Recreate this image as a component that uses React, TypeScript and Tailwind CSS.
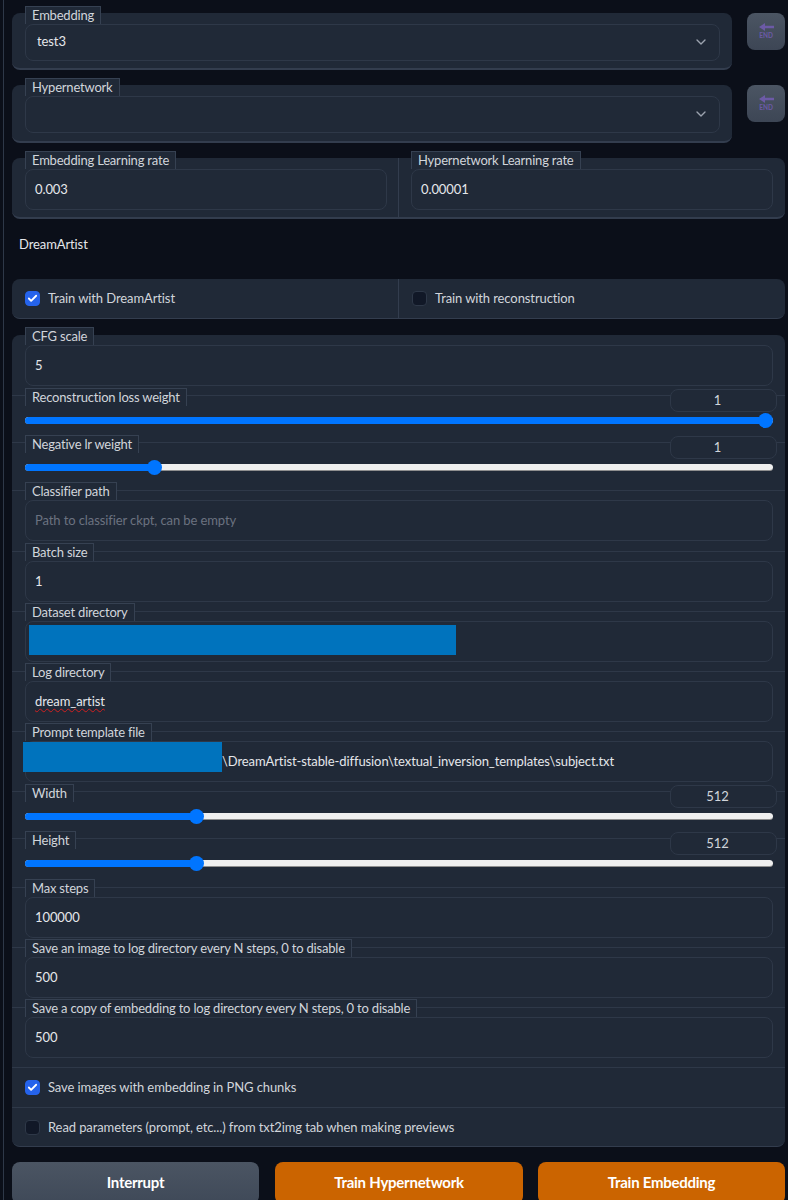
import type { ReactNode } from 'react'
import { ChevronDown, Check } from 'lucide-react'

const font = "font-['Lato',sans-serif]"

function Label({ text, className = '' }: { text: string; className?: string }) {
  return (
    <div className={`relative z-10 w-fit h-[18px] px-[6px] border border-b-0 border-[#364152] bg-[#202937] text-[13px] leading-[17px] tracking-[-0.2px] text-[#d1d5db] ${className}`}>
      {text}
    </div>
  )
}

function Box({ value, placeholder, className = '', children }: { value?: string; placeholder?: string; className?: string; children?: ReactNode }) {
  return (
    <div className={`relative flex items-center h-[41px] px-[9px] rounded-[8px] border border-[#2e3848] bg-[#202937] text-[13px] tracking-[-0.1px] text-[#e5e7eb] ${className}`}>
      {placeholder ? <span className="text-[#6b7280]">{placeholder}</span> : value}
      {children}
    </div>
  )
}

function TextField({ label, value, placeholder, height = 60, children }: { label: string; value?: string; placeholder?: string; height?: number; children?: ReactNode }) {
  return (
    <div className="pl-[13px] pr-[12px] border-t border-[#2e3848]" style={{ height }}>
      <Label text={label} className="-mt-[9px]" />
      <Box value={value} placeholder={placeholder}>{children}</Box>
    </div>
  )
}

function SliderField({ label, value, pct, height = 47 }: { label: string; value: string; pct: number; height?: number }) {
  const pos = `calc(${pct / 100} * (100% - 15px) + 7.5px)`
  return (
    <div className="pl-[13px] pr-[12px] border-t border-[#2e3848]" style={{ height }}>
      <div className="flex justify-between items-start -mt-[8px] -mr-[4px]">
        <Label text={label} />
        <div className="relative z-10 flex items-center justify-center w-[107px] h-[23px] mt-[1px] pr-[12px] rounded-[8px] border border-[#2e3848] bg-[#202937] text-[13px] text-[#d1d5db]">
          {value}
        </div>
      </div>
      <div className="relative h-[7px] mt-[5px] rounded-full bg-[#efefef] border-b border-[#8f8f8f]">
        <div className="h-[7px] rounded-full bg-[#0075ff]" style={{ width: pos }} />
        <div className="absolute top-[-4px] w-[15px] h-[15px] -ml-[7.5px] rounded-full bg-[#0075ff]" style={{ left: pos }} />
      </div>
    </div>
  )
}

function CheckBox({ checked, label }: { checked?: boolean; label: string }) {
  return (
    <div className="flex items-center gap-[8px] text-[13px] tracking-[-0.1px] text-[#d1d5db]">
      <span className={`flex items-center justify-center w-[15px] h-[15px] rounded-[4px] border ${checked ? 'bg-[#2563eb] border-[#2563eb]' : 'bg-[#111827] border-[#2e3848]'}`}>
        {checked && <Check size={11} strokeWidth={4} className="text-white" />}
      </span>
      {label}
    </div>
  )
}

function EndButton() {
  return (
    <div className="flex flex-col items-center justify-center w-[38px] h-[37px] rounded-[8px] bg-gradient-to-b from-[#4b5563] to-[#3d4655] text-[#6c5aa6]">
      <svg width="15" height="8" viewBox="0 0 15 8" fill="currentColor">
        <path d="M0 4 L6 0 V2.8 H15 V5.2 H6 V8 Z" />
      </svg>
      <span className="mt-[1px] text-[6.5px] leading-[8px] font-bold">END</span>
    </div>
  )
}

function SelectRow({ label, value, height }: { label: string; value?: string; height: number }) {
  return (
    <div className="flex items-start">
      <div className="w-[720px] pl-[13px] pr-[12px] rounded-[8px] border-b-2 border-[#333d4e] bg-[#202937]" style={{ height }}>
        <Label text={label} className="-mt-[7px]" />
        <Box value={value} className="!h-[37px] pl-[11px] pr-[10px] pb-[1px] justify-between">
          <span />
          <ChevronDown size={16} className="text-[#9ca3af]" />
        </Box>
      </div>
      <div className="ml-[15px]"><EndButton /></div>
    </div>
  )
}

export default function App() {
  return (
    <div className={`flex w-[788px] h-[1200px] overflow-hidden bg-[#0b0f19] ${font}`}>
      <div className="w-[4px] h-full border-r border-[#2e3848]" />
      <div className="flex-1 pl-[8px] pr-[3px] pt-[13px]">
        <SelectRow label="Embedding" value="test3" height={57} />
        <div className="mt-[15px]">
          <SelectRow label="Hypernetwork" height={58} />
        </div>

        <div className="mt-[15px] flex h-[61px] rounded-[8px] border-b-2 border-[#333d4e] bg-[#202937]">
          <div className="w-[387px] pl-[13px] pr-[11px] border-r border-[#333d4e]">
            <Label text="Embedding Learning rate" className="-mt-[7px]" />
            <Box value="0.003" />
          </div>
          <div className="flex-1 pl-[12px] pr-[12px]">
            <Label text="Hypernetwork Learning rate" className="-mt-[7px]" />
            <Box value="0.00001" />
          </div>
        </div>

        <div className="h-[60px] flex items-center pl-[7px] pb-[8px] text-[13px] tracking-[-0.1px] text-[#e5e7eb]">DreamArtist</div>

        <div className="flex h-[40px] rounded-[8px] border-b border-[#333d4e] bg-[#202937]">
          <div className="flex items-center w-[387px] pl-[13px] border-r border-[#333d4e]">
            <CheckBox checked label="Train with DreamArtist" />
          </div>
          <div className="flex items-center pl-[13px]">
            <CheckBox label="Train with reconstruction" />
          </div>
        </div>

        <div className="flow-root mt-[16px] h-[812px] rounded-[8px] border-b border-[#333d4e] bg-[#202937]">
          <div className="flow-root pl-[13px] pr-[12px] h-[60px]">
            <Label text="CFG scale" className="-mt-[8px]" />
            <Box value="5" />
          </div>
          <SliderField label="Reconstruction loss weight" value="1" pct={100} />
          <SliderField label="Negative lr weight" value="1" pct={16.7} height={48} />
          <TextField label="Classifier path" placeholder="Path to classifier ckpt, can be empty" height={61} />
          <TextField label="Batch size" value="1" />
          <TextField label="Dataset directory">
            <div className="absolute left-[3px] top-[3px] w-[427px] h-[30px] bg-[#0073bd]" />
          </TextField>
          <TextField label="Log directory">
            <span className="underline decoration-wavy decoration-[#d02020] decoration-1 underline-offset-2">dream_artist</span>
          </TextField>
          <TextField label="Prompt template file">
            <span className="pl-[187px] whitespace-nowrap">\DreamArtist-stable-diffusion\textual_inversion_templates\subject.txt</span>
            <div className="absolute -left-[3px] top-0 w-[199px] h-[30px] bg-[#0073bd]" />
          </TextField>
          <SliderField label="Width" value="512" pct={22.4} />
          <SliderField label="Height" value="512" pct={22.4} height={49} />
          <TextField label="Max steps" value="100000" />
          <TextField label="Save an image to log directory every N steps, 0 to disable" value="500" />
          <TextField label="Save a copy of embedding to log directory every N steps, 0 to disable" value="500" />
          <div className="flex items-center h-[40px] pl-[13px] border-t border-[#2e3848]">
            <CheckBox checked label="Save images with embedding in PNG chunks" />
          </div>
          <div className="flex items-center h-[40px] pl-[13px] border-t border-[#2e3848]">
            <CheckBox label="Read parameters (prompt, etc...) from txt2img tab when making previews" />
          </div>
        </div>

        <div className="mt-[15px] flex text-[15px] font-bold tracking-[-0.25px] text-white">
          <div className="flex items-center justify-center w-[247px] h-[42px] pb-[2px] rounded-[8px] bg-gradient-to-b from-[#4b5563] to-[#3f4958]">Interrupt</div>
          <div className="flex items-center justify-center w-[248px] h-[42px] pb-[2px] ml-[16px] rounded-[8px] bg-[#cb6400]">Train Hypernetwork</div>
          <div className="flex items-center justify-center w-[247px] h-[42px] pb-[2px] ml-[15px] rounded-[8px] bg-[#cb6400]">Train Embedding</div>
        </div>
      </div>
    </div>
  )
}
